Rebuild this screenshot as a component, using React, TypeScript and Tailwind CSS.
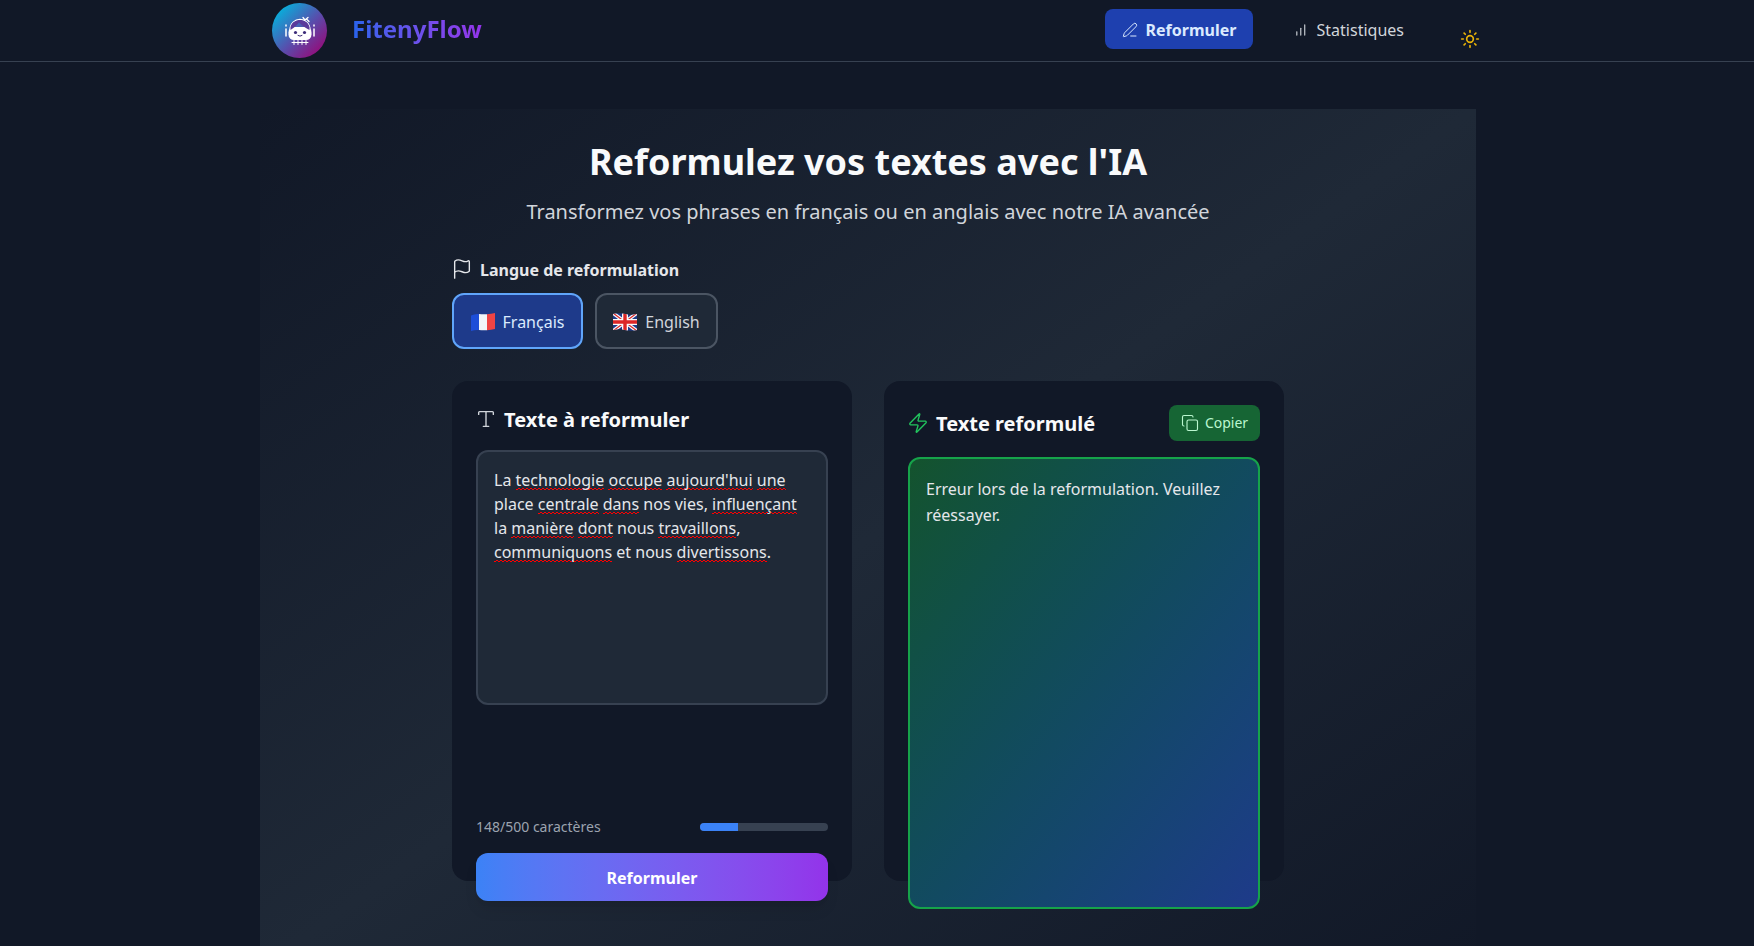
import { PenLine, ChartNoAxesColumnIncreasing, Sun, Flag, Type, Zap, Copy } from "lucide-react";

function Logo() {
  return (
    <div className="w-[55px] h-[55px] rounded-full bg-[linear-gradient(135deg,#03b4de_10%,#5a4bab_55%,#960a78_90%)] flex items-center justify-center shrink-0">
      <svg width="32" height="32" viewBox="0 0 32 32" fill="none" stroke="#fff" strokeWidth="1.3" strokeLinecap="round">
        <path d="M6 15 C6 8 11 4.5 16 4.5 C21 4.5 26 8 26 15" />
        <rect x="4.5" y="12" width="23" height="13" rx="5.5" fill="#fff" stroke="none" />
        <path d="M6.5 15 C10 13 13 10 15 7.5 C18 10.5 22 13 25.5 15 L25.5 12 C24 7 20 5 16 5 C12 5 8 7 6.5 12Z" fill="#5a3a9c" stroke="none" />
        <circle cx="11.5" cy="17.5" r="1.6" fill="#3b2a78" stroke="none" />
        <circle cx="20.5" cy="17.5" r="1.6" fill="#3b2a78" stroke="none" />
        <path d="M14 20.5 Q16 22 18 20.5" stroke="#3b2a78" strokeWidth="1" />
        <path d="M2 10v1M2 14v7M30 10v1M30 14v7" strokeWidth="1.5" />
        <path d="M19 2.5l2 2.5M24 2.5l-3 2.5M23 4.5l2 2" strokeWidth="1.3" />
        <path d="M8 27.5h16M10 25.5v4M14 25.5v4M18 25.5v4M22 25.5v4" strokeWidth="1" />
      </svg>
    </div>
  );
}

function FlagFr() {
  return (
    <svg width="24" height="18" viewBox="0 0 24 18" className="shrink-0">
      <path d="M0 2.5 Q4 0.5 8 1 V17 Q4 16.6 0 18Z" fill="#1d4ed8" />
      <path d="M8 1 Q12 1.6 16 1.2 V17.2 Q12 17.6 8 17Z" fill="#f1f5f9" />
      <path d="M16 1.2 Q20 0.8 24 0 V16 Q20 16.8 16 17.2Z" fill="#ef4444" />
    </svg>
  );
}

function FlagUk() {
  return (
    <svg width="24" height="18" viewBox="0 0 24 18" className="shrink-0">
      <clipPath id="uk"><path d="M0 1 Q6 -0.5 12 1 T24 1 V17 Q18 18.5 12 17 T0 17Z" /></clipPath>
      <g clipPath="url(#uk)">
        <rect width="24" height="18" fill="#1e3a8a" />
        <path d="M0 0L24 18M24 0L0 18" stroke="#f8fafc" strokeWidth="3.6" />
        <path d="M0 0L24 18M24 0L0 18" stroke="#dc2626" strokeWidth="1.2" />
        <path d="M12 0V18M0 9H24" stroke="#f8fafc" strokeWidth="6" />
        <path d="M12 0V18M0 9H24" stroke="#dc2626" strokeWidth="3.4" />
      </g>
    </svg>
  );
}

function Sq({ children }: { children: string }) {
  return <span className="bg-[linear-gradient(90deg,#f00_50%,transparent_50%),linear-gradient(90deg,#f00_50%,transparent_50%)] bg-[length:4px_1px] bg-[position:0_calc(100%-1px),2px_calc(100%-2px)] bg-repeat-x">{children}</span>;
}

export default function App() {
  return (
    <div className="h-screen overflow-hidden bg-[#111827] text-white font-['Noto_Sans',sans-serif]">
      <div className="w-[1736px]">
        <header className="h-[62px] w-[1754px] border-b border-[#374151]">
          <div className="w-[1216px] ml-[260px] pl-3 h-[61px] flex items-center">
            <Logo />
            <span className="ml-[25px] mb-[3px] text-2xl font-bold bg-gradient-to-r from-[#2563eb] to-[#9333ea] bg-clip-text text-transparent">FitenyFlow</span>
            <nav className="ml-auto mb-[3px] flex items-center">
              <div className="h-10 w-[148px] pt-px rounded-lg bg-[#1e40af] text-[#dbeafe] font-bold flex items-center justify-center gap-2">
                <PenLine size={16} strokeWidth={1.5} />
                <span>Reformuler</span>
              </div>
              <div className="h-10 ml-[26px] w-[125px] pt-px text-[#d1d5db] flex items-center gap-2 pl-4">
                <ChartNoAxesColumnIncreasing size={16} strokeWidth={2} className="text-[#d1d5db] -ml-px" />
                <span className="ml-px">Statistiques</span>
              </div>
            </nav>
            <Sun size={20} strokeWidth={2} className="text-[#eab308] ml-[56px] -mr-[4px] mt-[16px] shrink-0" />
          </div>
        </header>

        <main className="w-[1216px] ml-[260px] mt-[47px] h-[860px] bg-gradient-to-br from-[#111827] via-[#1f2937] to-[#111827] pt-[33px]">
          <h1 className="text-4xl leading-10 font-bold text-center text-[#f9fafb]">Reformulez vos textes avec l'IA</h1>
          <p className="mt-4 text-xl leading-7 text-center text-[#d1d5db]">Transformez vos phrases en français ou en anglais avec notre IA avancée</p>

          <div className="w-[832px] mx-auto mt-[31px]">
            <div className="flex items-center h-6">
              <Flag size={22} strokeWidth={1.5} className="text-[#e5e7eb] -ml-px" />
              <span className="font-bold text-[#e5e7eb] ml-[7px] pt-px">Langue de reformulation</span>
            </div>
            <div className="flex gap-3 mt-3">
              <div className="h-[56px] w-[131px] pt-px rounded-xl border-2 border-[#60a5fa] bg-[#1e3a8a] text-[#dbeafe] flex items-center justify-center gap-2">
                <FlagFr />
                <span>Français</span>
              </div>
              <div className="h-[56px] w-[123px] pt-px rounded-xl border-2 border-[#4b5563] bg-[#1f2937] text-[#d1d5db] flex items-center justify-center gap-2">
                <FlagUk />
                <span>English</span>
              </div>
            </div>

            <div className="grid grid-cols-2 gap-8 mt-8">
              <section className="h-[500px] rounded-2xl bg-[#111827] p-6">
                <div className="flex items-center gap-1.5 h-[28px]">
                  <Type size={22} strokeWidth={1.5} className="text-[#d1d5db] -ml-px" />
                  <h2 className="text-xl leading-7 font-bold text-[#f9fafb] ml-px pt-px">Texte à reformuler</h2>
                </div>
                <div className="mt-[17px] h-[255px] rounded-xl border-2 border-[#374151] bg-[#1f2937] p-4 text-[#e5e7eb] leading-6">
                  La <Sq>technologie</Sq> <Sq>occupe</Sq> <Sq>aujourd'hui</Sq> <Sq>une</Sq> place <Sq>centrale</Sq> <Sq>dans</Sq> nos vies, <Sq>influençant</Sq> la <Sq>manière</Sq> <Sq>dont</Sq> nous <Sq>travaillons</Sq>, <Sq>communiquons</Sq> et nous <Sq>divertissons</Sq>.
                </div>
                <div className="mt-[112px] flex items-center justify-between h-5">
                  <span className="text-sm text-[#9ca3af]">148/500 caractères</span>
                  <div className="w-32 h-2 rounded-full bg-[#374151] overflow-hidden">
                    <div className="h-full bg-[#3b82f6]" style={{ width: "29.6%" }} />
                  </div>
                </div>
                <div className="mt-4 h-12 pt-px rounded-xl bg-gradient-to-r from-[#3b82f6] to-[#9333ea] font-bold flex items-center justify-center shadow-lg">Reformuler</div>
              </section>

              <section className="h-[500px] rounded-2xl bg-[#111827] p-6">
                <div className="flex items-center justify-between h-9">
                  <div className="flex items-center gap-1.5">
                    <Zap size={22} strokeWidth={1.5} className="text-[#22c55e] -ml-px" />
                    <h2 className="text-xl leading-7 font-bold text-[#f9fafb] ml-px pt-px">Texte reformulé</h2>
                  </div>
                  <div className="h-9 w-[91px] rounded-lg bg-[#166534] text-[#bbf7d0] text-sm flex items-center justify-center gap-1.5">
                    <Copy size={18} strokeWidth={1.5} />
                    <span>Copier</span>
                  </div>
                </div>
                <div className="mt-4 h-[452px] rounded-xl border-2 border-[#16a34a] bg-gradient-to-br from-[#14532d] to-[#1e3a8a] px-4 pt-[17px] text-[#e5e7eb] leading-[26px]">
                  Erreur lors de la reformulation. Veuillez réessayer.
                </div>
              </section>
            </div>
          </div>
        </main>
      </div>
    </div>
  );
}
